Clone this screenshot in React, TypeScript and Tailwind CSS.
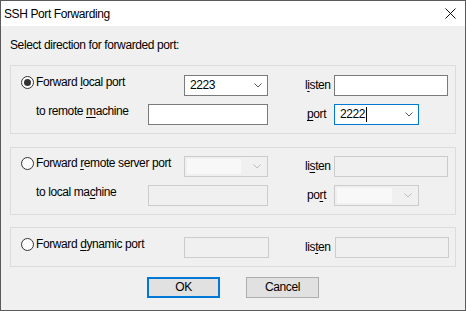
import React from "react";

const font = "font-['Liberation_Sans',Arial,sans-serif] text-[12px] tracking-[-0.4px] text-black";

function U({ children }: { children: React.ReactNode }) {
  return <span className="underline decoration-1 underline-offset-[2px]">{children}</span>;
}

function Radio({ checked }: { checked?: boolean }) {
  return (
    <span className="mt-[1px] flex h-[13px] w-[13px] shrink-0 items-center justify-center rounded-full border border-[#333333] bg-white">
      {checked ? <span className="h-[7px] w-[7px] rounded-full bg-[#333333]" /> : null}
    </span>
  );
}

function Chevron({ disabled }: { disabled?: boolean }) {
  return (
    <svg width="8" height="5" viewBox="0 0 8 5" className="shrink-0" aria-hidden>
      <path d="M0.5 0.5 L4 4 L7.5 0.5" fill="none" stroke={disabled ? "#bcbcbc" : "#555555"} strokeWidth="1" />
    </svg>
  );
}

function Combo({
  value,
  width,
  disabled,
  focused,
}: {
  value?: string;
  width: string;
  disabled?: boolean;
  focused?: boolean;
}) {
  if (disabled) {
    return (
      <div className={`flex h-[21px] ${width} shrink-0 items-center border border-[#cccccc] bg-[#f0f0f0] pl-[2px] pr-[6px]`}>
        <div className="h-[15px] flex-1 bg-[#f8f8f8]" />
        <div className="flex w-[20px] justify-end">
          <Chevron disabled />
        </div>
      </div>
    );
  }
  return (
    <div
      className={`flex h-[21px] ${width} shrink-0 items-center justify-between border bg-white pl-[5px] pr-[5px] ${
        focused ? "border-[#0078d7]" : "border-[#7a7a7a]"
      }`}
    >
      <span className="flex items-center leading-[15px]">
        {value}
        {focused ? <span className="ml-[1px] h-[15px] w-[1px] bg-black" /> : null}
      </span>
      <Chevron />
    </div>
  );
}

function TextBox({ width, disabled }: { width: string; disabled?: boolean }) {
  return (
    <div
      className={`h-[21px] ${width} shrink-0 border ${
        disabled ? "border-[#cccccc] bg-[#f0f0f0]" : "border-[#7a7a7a] bg-white"
      }`}
    />
  );
}

function SideLabel({ children, indent }: { children: React.ReactNode; indent: string }) {
  return (
    <div className={`flex h-[21px] w-[66px] shrink-0 items-center ${indent} leading-[15px]`}>{children}</div>
  );
}

function RadioLabel({ checked, children }: { checked?: boolean; children: React.ReactNode }) {
  return (
    <div className="flex w-[163px] shrink-0 items-start gap-[2px] leading-[15px]">
      <Radio checked={checked} />
      <span>{children}</span>
    </div>
  );
}

function SubLabel({ children }: { children: React.ReactNode }) {
  return <div className="w-[127px] shrink-0 pl-[15px] leading-[15px]">{children}</div>;
}

export default function App() {
  return (
    <div className={`flex h-[311px] w-[466px] flex-col border border-[#5b5b5b] bg-[#f0f0f0] ${font}`}>
      <div className="flex h-[25px] shrink-0 items-center justify-between bg-white pl-[3px] pr-[9px]">
        <span className="text-[12px]">SSH Port Forwarding</span>
        <svg width="11" height="11" viewBox="0 0 11 11" aria-hidden>
          <path d="M0.5 0.5 L10.5 10.5 M10.5 0.5 L0.5 10.5" stroke="#111111" strokeWidth="1" />
        </svg>
      </div>

      <div className="flex flex-col px-[9px]">
        <p className="mt-[12px] leading-[15px]">Select direction for forwarded port:</p>

        <div className="mt-[12px] flex flex-col gap-[8px] border border-[#dcdcdc] pb-[8px] pl-[10px] pt-[9px]">
          <div className="flex items-start">
            <RadioLabel checked>
              Forward <U>l</U>ocal port
            </RadioLabel>
            <Combo value="2223" width="w-[84px]" />
            <SideLabel indent="pl-[37px]">
              l<U>i</U>sten
            </SideLabel>
            <TextBox width="w-[114px]" />
          </div>
          <div className="flex items-start">
            <SubLabel>
              to remote <U>m</U>achine
            </SubLabel>
            <TextBox width="w-[120px]" />
            <SideLabel indent="pl-[39px]">
              <U>p</U>ort
            </SideLabel>
            <Combo value="2222" width="w-[85px]" focused />
          </div>
        </div>

        <div className="mt-[13px] flex flex-col gap-[8px] border border-[#dcdcdc] pb-[8px] pl-[10px] pt-[8px]">
          <div className="flex items-start">
            <RadioLabel>
              Forward <U>r</U>emote server port
            </RadioLabel>
            <Combo width="w-[84px]" disabled />
            <SideLabel indent="pl-[37px]">
              li<U>s</U>ten
            </SideLabel>
            <TextBox width="w-[114px]" disabled />
          </div>
          <div className="flex items-start">
            <SubLabel>
              to local ma<U>c</U>hine
            </SubLabel>
            <TextBox width="w-[120px]" disabled />
            <SideLabel indent="pl-[39px]">
              po<U>r</U>t
            </SideLabel>
            <Combo width="w-[85px]" disabled />
          </div>
        </div>

        <div className="mt-[12px] flex border border-[#dcdcdc] pb-[8px] pl-[10px] pt-[9px]">
          <div className="flex items-start">
            <RadioLabel>
              Forward <U>d</U>ynamic port
            </RadioLabel>
            <TextBox width="w-[85px]" disabled />
            <SideLabel indent="pl-[36px]">
              lis<U>t</U>en
            </SideLabel>
            <TextBox width="w-[114px]" disabled />
          </div>
        </div>

        <div className="mt-[10px] flex justify-center gap-[26px]">
          <button className="flex h-[21px] w-[73px] items-center justify-center border-2 border-[#0078d7] bg-[#e1e1e1] leading-[15px]">
            OK
          </button>
          <button className="flex h-[21px] w-[73px] items-center justify-center border border-[#adadad] bg-[#e1e1e1] leading-[15px]">
            Cancel
          </button>
        </div>
      </div>
    </div>
  );
}
